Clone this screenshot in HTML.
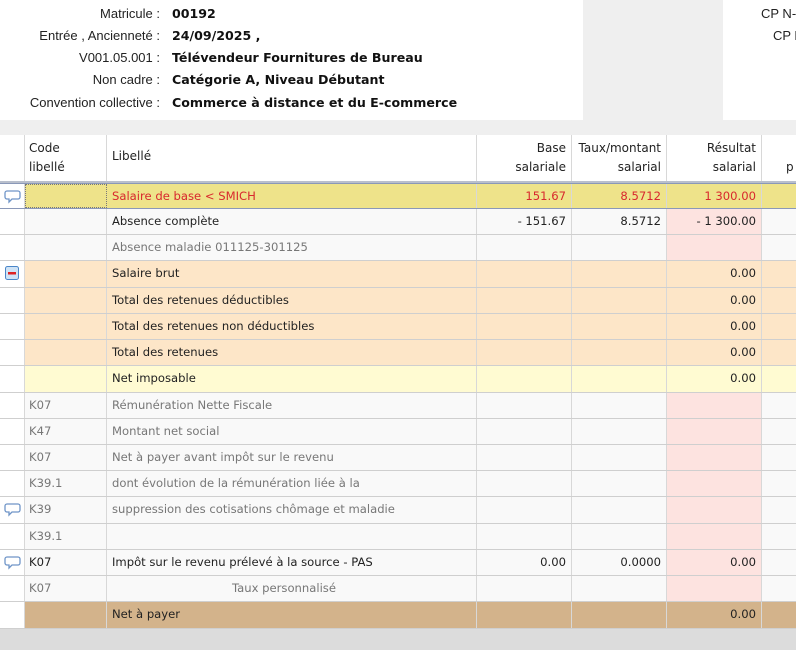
<!DOCTYPE html>
<html><head><meta charset="utf-8"><style>
*{margin:0;padding:0;box-sizing:border-box}
body{width:796px;height:650px;overflow:hidden;background:#dcdcdc;font-family:"DejaVu Sans","Liberation Sans",sans-serif;font-size:11.6px;color:#222;position:relative}
.top{position:absolute;left:0;top:0;width:796px;height:135px;background:#efefef}
.wp{position:absolute;background:#fff}
.lbl{position:absolute;right:0;width:160px;text-align:right;font-family:"Liberation Sans",sans-serif;font-size:13px;color:#222;white-space:nowrap}
.val{position:absolute;left:172px;font-weight:bold;font-size:12.6px;white-space:nowrap;color:#111}
.tbl{position:absolute;left:0;top:135px;width:796px}
.row{position:absolute;left:0;width:796px;height:26px;border-bottom:1px solid #cfcfcf;background:#f9f9f9}
.c{position:absolute;top:0;height:100%;border-right:1px solid #d8d8d8;line-height:25px;white-space:nowrap;overflow:hidden}
.c0{left:0;width:25px;background:#fff}
.c1{left:25px;width:82px;padding-left:4px;color:#777}
.c2{left:107px;width:370px;padding-left:5px}
.c3{left:477px;width:95px;text-align:right;padding-right:5px}
.c4{left:572px;width:95px;text-align:right;padding-right:5px}
.c5{left:667px;width:95px;text-align:right;padding-right:5px}
.c6{left:762px;width:34px;border-right:none}
.pk .c5{background:#fde3e0}
.g .c2{color:#777}
.or{background:#fde6c8}
.yl{background:#eee38a;border-top:1px solid #8a98b8;border-bottom:1px solid #8a98b8}
.yl .c2,.yl .c3,.yl .c4,.yl .c5{color:#d8282e}
.ny{background:#fffbd2}
.br{background:#d3b38b}
.hd{position:absolute;left:0;top:0;width:796px;height:48px;background:#fff;border-bottom:2px solid #b9bfcc}
.hd .c{line-height:19px;padding-top:4px;color:#222;white-space:normal;font-size:12px}
.ic{position:absolute;left:4px;top:6px}
</style></head><body>
<div class="top">
<div class="wp" style="left:0;top:0;width:583px;height:120px">
<div class="lbl" style="left:0;top:6px;width:160px">Matricule :</div><div class="val" style="top:6px">00192</div>
<div class="lbl" style="left:0;top:28px;width:160px">Entrée , Ancienneté :</div><div class="val" style="top:28px">24/09/2025 ,</div>
<div class="lbl" style="left:0;top:50px;width:160px">V001.05.001 :</div><div class="val" style="top:50px">Télévendeur Fournitures de Bureau</div>
<div class="lbl" style="left:0;top:72px;width:160px">Non cadre :</div><div class="val" style="top:72px">Catégorie A, Niveau Débutant</div>
<div class="lbl" style="left:0;top:95px;width:160px">Convention collective :</div><div class="val" style="top:95px">Commerce à distance et du E-commerce</div>
</div>
<div class="wp" style="left:723px;top:0;width:73px;height:120px;font-family:'Liberation Sans',sans-serif;font-size:13px;overflow:hidden;white-space:nowrap">
<div style="position:absolute;left:38px;top:6px">CP N-</div>
<div style="position:absolute;left:50px;top:28px">CP N</div>
</div>
</div>
<div class="tbl">
<div class="hd">
<div class="c c0"></div>
<div class="c c1" style="color:#222">Code<br>libellé</div>
<div class="c c2" style="line-height:42px;padding-top:0">Libellé</div>
<div class="c c3">Base<br>salariale</div>
<div class="c c4">Taux/montant<br>salarial</div>
<div class="c c5">Résultat<br>salarial</div>
<div class="c c6" style="padding-left:24px"><br>p</div>
</div>
</div>
<div style="position:absolute;left:0;top:183px;width:796px">
<div class="row yl" style="top:0"><div class="c c0"><svg class="ic" width="17" height="14" viewBox="0 0 17 14"><path d="M3 1h11a2 2 0 0 1 2 2v4a2 2 0 0 1-2 2H8l-3 3v-3H3a2 2 0 0 1-2-2V3a2 2 0 0 1 2-2z" fill="#fff" stroke="#6f95c8" stroke-width="1.3"/></svg></div><div class="c c1" style="border:1px dotted #777"></div><div class="c c2">Salaire de base &lt; SMICH</div><div class="c c3">151.67</div><div class="c c4">8.5712</div><div class="c c5">1 300.00</div><div class="c c6"></div></div>
<div class="row pk" style="top:26px"><div class="c c0"></div><div class="c c1"></div><div class="c c2">Absence complète</div><div class="c c3">- 151.67</div><div class="c c4">8.5712</div><div class="c c5">- 1 300.00</div><div class="c c6"></div></div>
<div class="row pk g" style="top:52px"><div class="c c0"></div><div class="c c1"></div><div class="c c2">Absence maladie 011125-301125</div><div class="c c3"></div><div class="c c4"></div><div class="c c5"></div><div class="c c6"></div></div>
<div class="row or" style="top:78px;height:27px"><div class="c c0"><svg class="ic" width="15" height="15" viewBox="0 0 15 15" style="left:5px;top:5px"><rect x="0.5" y="0.5" width="13" height="13" rx="2" fill="#cfe3f6" stroke="#4a86c8"/><rect x="3" y="6" width="8" height="2.5" fill="#d22"/></svg></div><div class="c c1"></div><div class="c c2">Salaire brut</div><div class="c c3"></div><div class="c c4"></div><div class="c c5">0.00</div><div class="c c6"></div></div>
<div class="row or" style="top:105px"><div class="c c0"></div><div class="c c1"></div><div class="c c2">Total des retenues déductibles</div><div class="c c3"></div><div class="c c4"></div><div class="c c5">0.00</div><div class="c c6"></div></div>
<div class="row or" style="top:131px"><div class="c c0"></div><div class="c c1"></div><div class="c c2">Total des retenues non déductibles</div><div class="c c3"></div><div class="c c4"></div><div class="c c5">0.00</div><div class="c c6"></div></div>
<div class="row or" style="top:157px"><div class="c c0"></div><div class="c c1"></div><div class="c c2">Total des retenues</div><div class="c c3"></div><div class="c c4"></div><div class="c c5">0.00</div><div class="c c6"></div></div>
<div class="row ny" style="top:183px;height:27px"><div class="c c0"></div><div class="c c1"></div><div class="c c2">Net imposable</div><div class="c c3"></div><div class="c c4"></div><div class="c c5">0.00</div><div class="c c6"></div></div>
<div class="row pk g" style="top:210px"><div class="c c0"></div><div class="c c1">K07</div><div class="c c2">Rémunération Nette Fiscale</div><div class="c c3"></div><div class="c c4"></div><div class="c c5"></div><div class="c c6"></div></div>
<div class="row pk g" style="top:236px"><div class="c c0"></div><div class="c c1">K47</div><div class="c c2">Montant net social</div><div class="c c3"></div><div class="c c4"></div><div class="c c5"></div><div class="c c6"></div></div>
<div class="row pk g" style="top:262px"><div class="c c0"></div><div class="c c1">K07</div><div class="c c2">Net à payer avant impôt sur le revenu</div><div class="c c3"></div><div class="c c4"></div><div class="c c5"></div><div class="c c6"></div></div>
<div class="row pk g" style="top:288px"><div class="c c0"></div><div class="c c1">K39.1</div><div class="c c2">dont évolution de la rémunération liée à la</div><div class="c c3"></div><div class="c c4"></div><div class="c c5"></div><div class="c c6"></div></div>
<div class="row pk g" style="top:314px;height:27px"><div class="c c0"><svg class="ic" width="17" height="14" viewBox="0 0 17 14"><path d="M3 1h11a2 2 0 0 1 2 2v4a2 2 0 0 1-2 2H8l-3 3v-3H3a2 2 0 0 1-2-2V3a2 2 0 0 1 2-2z" fill="#fff" stroke="#6f95c8" stroke-width="1.3"/></svg></div><div class="c c1">K39</div><div class="c c2">suppression des cotisations chômage et maladie</div><div class="c c3"></div><div class="c c4"></div><div class="c c5"></div><div class="c c6"></div></div>
<div class="row pk g" style="top:341px"><div class="c c0"></div><div class="c c1">K39.1</div><div class="c c2"></div><div class="c c3"></div><div class="c c4"></div><div class="c c5"></div><div class="c c6"></div></div>
<div class="row pk" style="top:367px"><div class="c c0"><svg class="ic" width="17" height="14" viewBox="0 0 17 14"><path d="M3 1h11a2 2 0 0 1 2 2v4a2 2 0 0 1-2 2H8l-3 3v-3H3a2 2 0 0 1-2-2V3a2 2 0 0 1 2-2z" fill="#fff" stroke="#6f95c8" stroke-width="1.3"/></svg></div><div class="c c1" style="color:#222">K07</div><div class="c c2">Impôt sur le revenu prélevé à la source - PAS</div><div class="c c3">0.00</div><div class="c c4">0.0000</div><div class="c c5">0.00</div><div class="c c6"></div></div>
<div class="row pk g" style="top:393px"><div class="c c0"></div><div class="c c1">K07</div><div class="c c2" style="padding-left:125px">Taux personnalisé</div><div class="c c3"></div><div class="c c4"></div><div class="c c5"></div><div class="c c6"></div></div>
<div class="row br" style="top:419px;height:27px"><div class="c c0"></div><div class="c c1"></div><div class="c c2">Net à payer</div><div class="c c3"></div><div class="c c4"></div><div class="c c5">0.00</div><div class="c c6"></div></div>
</div>
</body></html>
